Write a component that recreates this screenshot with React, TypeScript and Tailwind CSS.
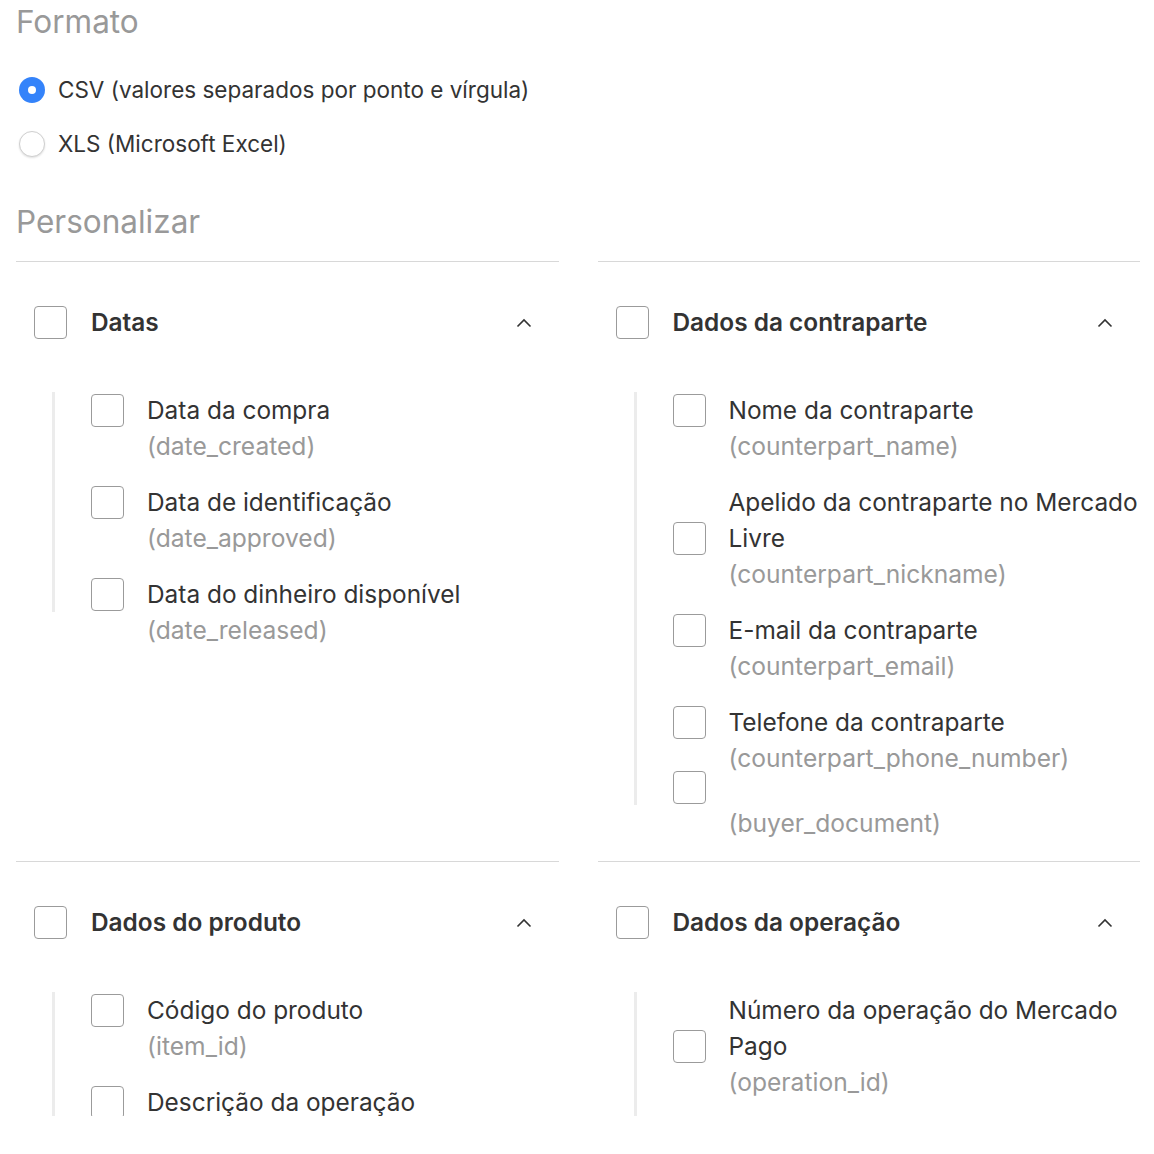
import React from 'react';

type Field = {
  lines: string[];
  field?: string;
  className?: string;
};

type Group = {
  title: string;
  fields: Field[];
  stretch?: boolean;
};

const groups: Group[] = [
  {
    title: 'Datas',
    fields: [
      { lines: ['Data da compra'], field: 'date_created' },
      { lines: ['Data de identificação'], field: 'date_approved' },
      { lines: ['Data do dinheiro disponível'], field: 'date_released' },
    ],
  },
  {
    title: 'Dados da contraparte',
    fields: [
      { lines: ['Nome da contraparte'], field: 'counterpart_name' },
      { lines: ['Apelido da contraparte no Mercado', 'Livre'], field: 'counterpart_nickname' },
      { lines: ['E-mail da contraparte'], field: 'counterpart_email' },
      { lines: ['Telefone da contraparte'], field: 'counterpart_phone_number' },
      { lines: [], field: 'buyer_document', className: '-mt-[27px]' },
    ],
  },
  {
    title: 'Dados do produto',
    fields: [
      { lines: ['Código do produto'], field: 'item_id' },
      // rest of the list is below the fold
      { lines: ['Descrição da operação'] },
    ],
  },
  {
    title: 'Dados da operação',
    stretch: true,
    fields: [{ lines: ['Número da operação do Mercado', 'Pago'], field: 'operation_id' }],
  },
];

function Checkbox() {
  return <div className="w-[33px] h-[33px] shrink-0 rounded-[4px] border-[1.5px] border-[#9b9b9b] bg-white" />;
}

function Radio({ checked }: { checked?: boolean }) {
  if (checked) {
    return (
      <div className="ml-[3px] w-[26px] h-[26px] rounded-full bg-[#3483fa] flex items-center justify-center">
        <div className="w-[8px] h-[8px] rounded-full bg-white" />
      </div>
    );
  }
  return <div className="ml-[3px] w-[26px] h-[26px] rounded-full border border-[#cfcfcf] bg-white shadow-[0_1px_2px_rgba(0,0,0,0.12)]" />;
}

function ChevronUp() {
  return (
    <svg width="16" height="10" viewBox="0 0 16 10" fill="none">
      <polyline points="1.5,8.5 8,2 14.5,8.5" stroke="#333" strokeWidth="1.6" />
    </svg>
  );
}

function FieldRow({ item, last }: { item: Field; last: boolean }) {
  return (
    <div className={item.className}>
      <div className="flex items-end gap-[23px]">
        <div className="h-[36px] flex items-center shrink-0">
          <Checkbox />
        </div>
        <div className="text-[24.4px] leading-[36px] text-[#333]">
          {item.lines.map((l) => (
            <div key={l} className="whitespace-nowrap">{l}</div>
          ))}
        </div>
      </div>
      {item.field && (
        <div className={`pl-[56px] text-[24.6px] leading-[36px] text-[#999] whitespace-nowrap ${last ? '-mb-[36px]' : ''}`}>
          ({item.field})
        </div>
      )}
    </div>
  );
}

function GroupSection({ group }: { group: Group }) {
  return (
    <section className="flex flex-col border-t border-[#d8d8d8] pt-[44px] pb-[56px]">
      <div className="flex items-center h-[33px] pl-[18px] pr-[27px] gap-[24px]">
        <Checkbox />
        <span className="flex-1 text-[24.4px] font-semibold text-[#333]">{group.title}</span>
        <ChevronUp />
      </div>
      <div
        className={`mt-[53px] ml-[36px] pl-[36px] border-l-[3px] border-[#ececec] flex flex-col gap-[20px] ${
          group.stretch ? 'flex-1' : ''
        }`}
      >
        {group.fields.map((f, i) => (
          <FieldRow key={f.lines.join(' ') + (f.field ?? '')} item={f} last={i === group.fields.length - 1} />
        ))}
      </div>
    </section>
  );
}

export default function App() {
  return (
    <div className="w-[1154px] h-[1116px] overflow-hidden bg-white pl-4 pr-[14px] font-['Inter',sans-serif]">
      <h2 className="pt-1 text-[31.5px] leading-[36px] text-[#999]">Formato</h2>

      <div className="mt-[32px] flex flex-col gap-[18px]">
        <label className="flex items-center h-[36px] gap-[13px]">
          <Radio checked />
          <span className="text-[22.5px] text-[#333]">CSV (valores separados por ponto e vírgula)</span>
        </label>
        <label className="flex items-center h-[36px] gap-[13px]">
          <Radio />
          <span className="text-[22.5px] text-[#333]">XLS (Microsoft Excel)</span>
        </label>
      </div>

      <h2 className="mt-[42px] text-[31.5px] leading-[36px] text-[#999]">Personalizar</h2>

      <div className="mt-[21px] grid grid-cols-2 gap-x-[39px]">
        {groups.map((g) => (
          <GroupSection key={g.title} group={g} />
        ))}
      </div>
    </div>
  );
}
